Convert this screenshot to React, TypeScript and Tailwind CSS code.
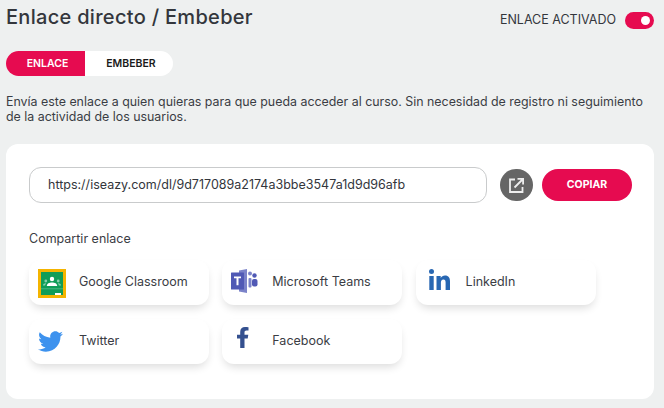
import { FaTwitter } from 'react-icons/fa';
import { ReactNode } from 'react';

const font = "font-['Inter','Liberation_Sans',sans-serif]";

function ClassroomIcon() {
    return (
        <svg width="28" height="29" viewBox="0 0 28 29">
            <rect width="28" height="29" fill="#f4b400" />
            <rect x="3" y="3" width="22" height="23" fill="#0f9d58" />
            <circle cx="14" cy="10" r="2.200" fill="#fff" />
            <path d="M8.800 17c0-2.500 2.500-3.600 5.200-3.600s5.200 1.100 5.200 3.600z" fill="#fff" />
            <circle cx="7.800" cy="12" r="1.400" fill="#fff" fillOpacity="0.5" />
            <circle cx="20.200" cy="12" r="1.400" fill="#fff" fillOpacity="0.5" />
            <path d="M5 16.500c0-1.400 1.200-2.200 2.800-2.200l.4.100c-.7.600-1.100 1.300-1.100 2.100zM23 16.500c0-1.400-1.200-2.200-2.800-2.200l-.4.100c.7.600 1.100 1.300 1.100 2.100z" fill="#fff" fillOpacity="0.5" />
            <rect x="3" y="19.500" width="22" height="0.700" fill="#fff" fillOpacity="0.35" />
            <rect x="17" y="24" width="6" height="2" fill="#fff" />
        </svg>
    );
}

function TeamsIcon() {
    return (
        <svg width="27" height="24" viewBox="0 0 27 24">
            <path d="M8 1.500L16 0v24l-8-1.500z" fill="#7b83c9" />
            <rect x="0" y="3.500" width="13" height="17" rx="0.500" fill="#5059b5" />
            <path d="M3 7.500h7v1.700H7.500v7h-2v-7H3z" fill="#fff" />
            <circle cx="23.500" cy="6.500" r="2.200" fill="#5059b5" />
            <rect x="21" y="10" width="5.500" height="7.500" rx="2" fill="#5059b5" />
            <circle cx="19" cy="4.500" r="2" fill="#7b83c9" />
            <rect x="17.500" y="9" width="3" height="9.500" rx="1" fill="#7b83c9" />
        </svg>
    );
}

function LinkedinIcon() {
    return (
        <svg width="21" height="21" viewBox="0 0 21 21" fill="#2867b2">
            <circle cx="2.500" cy="2.500" r="2.500" />
            <rect x="0.300" y="7" width="4.400" height="14" />
            <path d="M7.500 7h4.200v2c.8-1.400 2.300-2.400 4.300-2.400 3.700 0 5 2.400 5 6V21h-4.400v-7.400c0-1.800-.5-3.100-2.200-3.100-1.800 0-2.500 1.400-2.500 3.100V21H7.500z" />
        </svg>
    );
}

function FacebookIcon() {
    return (
        <svg width="12" height="21" viewBox="0 0 12 21" fill="#34508f">
            <path d="M3.200 21V11.500H0V7.800h3.200V5C3.200 1.800 5.100 0 8 0c1.400 0 2.900.2 3.500.3v3.300H9.600C8 3.600 7.500 4.500 7.500 5.600v2.200h3.800l-.6 3.700H7.500V21z" />
        </svg>
    );
}

function ShareCard({ icon, label, iconClass }: { icon: ReactNode; label: string; iconClass: string }) {
    return (
        <div className="flex h-[45px] rounded-xl bg-white shadow-[0_5px_8px_-2px_rgba(0,0,0,0.14)]">
            <div className={`w-[50px] ${iconClass}`}>{icon}</div>
            <span className="self-center text-[12.500px] text-[#3a3d44]">{label}</span>
        </div>
    );
}

export default function App() {
    return (
        <div className={`w-[664px] h-[408px] overflow-hidden bg-[#eef0f0] pl-[6px] pt-[5px] ${font}`}>
            {/* Header */}
            <div className="flex items-start justify-between w-[648px] h-[24px]">
                <h1 className="text-[20px] leading-[24px] font-medium tracking-[0.3px] text-[#33363c]">Enlace directo / Embeber</h1>
                <div className="flex items-center gap-[9px] mt-[6px]">
                    <span className="text-[12.500px] text-[#33363c]">ENLACE ACTIVADO</span>
                    <div className="flex items-center justify-end w-[29px] h-[17px] rounded-full bg-[#e60b50] pr-[4px]">
                        <div className="w-[9px] h-[9px] rounded-full bg-white" />
                    </div>
                </div>
            </div>

            {/* Tabs */}
            <div className="flex w-[167px] h-[25px] mt-[22px] rounded-full overflow-hidden bg-white text-[10.500px] font-semibold">
                <div className="w-[79px] pl-[4px] flex items-center justify-center bg-[#e60b50] text-white">ENLACE</div>
                <div className="flex-1 pl-[4px] flex items-center justify-center text-[#1a1a1a]">EMBEBER</div>
            </div>

            <p className="w-[648px] mt-[18px] text-[12.400px] leading-[15px] text-[#3a3d44]">
                Envía este enlace a quien quieras para que pueda acceder al curso. Sin necesidad de registro ni seguimiento de la actividad de los usuarios.
            </p>

            {/* Card */}
            <div className="mt-[20px] w-[648px] h-[255px] rounded-xl bg-white pl-[23px] pr-[22px] pt-[23px]">
                <div className="flex items-center">
                    <div className="flex items-center w-[458px] h-[36px] rounded-xl border border-[#c9cbcc] pl-[18px] text-[12.500px] text-[#33363c]">
                        https://iseazy.com/dl/9d717089a2174a3bbe3547a1d9d96afb
                    </div>
                    <div className="flex items-center justify-center w-[33px] h-[32px] ml-[13px] rounded-full bg-[#666666]">
                        <svg width="15" height="15" viewBox="0 0 15 15" fill="none" stroke="#eeeeee" strokeWidth="1.800">
                            <path d="M6 1.500H1v12.500h12.500V9" />
                            <path d="M5.500 9.500L14 1M8.500 .9h5.600v5.600" />
                        </svg>
                    </div>
                    <button className="w-[90px] h-[32px] ml-[9px] rounded-full bg-[#e60b50] text-white text-[10.500px] font-bold">COPIAR</button>
                </div>

                <div className="mt-[27px] text-[12.500px] text-[#3a3d44]">Compartir enlace</div>

                <div className="grid grid-cols-[180px_180px_180px] gap-x-[13.300px] gap-y-[14px] mt-[11px]">
                    <ShareCard icon={<ClassroomIcon />} iconClass="pl-[9px] pt-[9px]" label="Google Classroom" />
                    <ShareCard icon={<TeamsIcon />} iconClass="pl-[9px] pt-[9px]" label="Microsoft Teams" />
                    <ShareCard icon={<LinkedinIcon />} iconClass="pl-[13px] pt-[9px]" label="LinkedIn" />
                    <ShareCard icon={<FaTwitter className="text-[#3d92ee]" size={25} />} iconClass="pl-[9px] pt-[10px]" label="Twitter" />
                    <ShareCard icon={<FacebookIcon />} iconClass="pl-[15px] pt-[8px]" label="Facebook" />
                </div>
            </div>
        </div>
    );
}
